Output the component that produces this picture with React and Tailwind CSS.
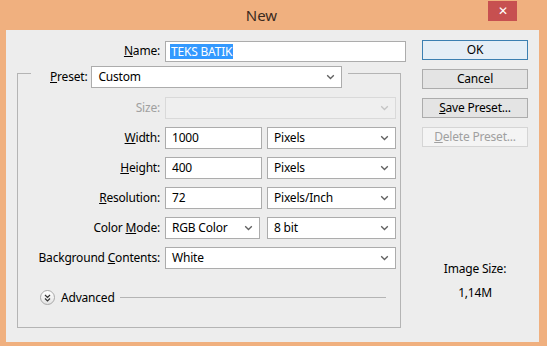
const font = { fontFamily: '"Noto Sans", "Liberation Sans", sans-serif' };

function Chevron({ disabled }) {
  return (
    <svg width="9" height="6" viewBox="0 0 9 6" className="shrink-0">
      <path d="M1.2 1.2 L4.5 4.5 L7.8 1.2" fill="none" stroke={disabled ? '#c4c4c4' : '#606060'} strokeWidth="1.3" />
    </svg>
  );
}

function Select({ value, width, disabled }) {
  return (
    <div
      className={`h-[22px] flex items-center justify-between pl-[6px] pr-[6px] border ${
        disabled ? 'bg-[#efefef] border-[#d9d9d9]' : 'bg-white border-[#acacac]'
      }`}
      style={{ width }}
    >
      <span className="text-[12px] text-black leading-none">{value}</span>
      <Chevron disabled={disabled} />
    </div>
  );
}

function Input({ value, width }) {
  return (
    <div className="h-[22px] flex items-center pl-[6px] bg-white border border-[#acacac]" style={{ width }}>
      <span className="text-[12px] text-black leading-none">{value}</span>
    </div>
  );
}

function Label({ children, width, disabled }) {
  return (
    <div
      className={`text-right pr-[5px] text-[12px] leading-none ${disabled ? 'text-[#a0a0a0]' : 'text-black'}`}
      style={{ width }}
    >
      {children}
    </div>
  );
}

function Btn({ children, primary, disabled }) {
  return (
    <div
      className={`h-[20px] w-[106px] flex items-center justify-center text-[12px] leading-none border ${
        primary ? 'border-[#3c7fb1] bg-[#e5eef6]' : disabled ? 'border-[#d5d5d5] bg-[#f4f4f4]' : 'border-[#acacac] bg-[#e4e4e4]'
      } ${disabled ? 'text-[#a0a0a0]' : 'text-black'}`}
    >
      {children}
    </div>
  );
}

export default function App() {
  return (
    <div className="w-[547px] h-[346px] bg-[#f0b07f] flex flex-col tracking-[-0.2px]" style={font}>
      {/* title bar */}
      <div className="h-[30px] relative flex items-center justify-center shrink-0">
        <span className="text-[15px] text-[#3b2a1e] ml-[-24px] tracking-normal">New</span>
        <div className="absolute top-[1px] left-[488px] w-[29px] h-[20px] bg-[#c75050] flex items-center justify-center text-white text-[12px] leading-none">
          ✕
        </div>
      </div>

      {/* client area */}
      <div className="ml-[6px] mr-[8px] mb-[4px] flex-1 bg-[#ededed] flex">
        <div className="w-[410px] pt-[11px] flex flex-col">
          {/* name */}
          <div className="flex items-center h-[20px]">
            <Label width={159}>
              <u>N</u>ame:
            </Label>
            <div className="h-[21px] w-[241px] flex items-center pl-[4px] bg-white border border-[#acacac]">
              <span className="text-[12px] leading-[15px] bg-[#3399ff] text-white px-[1px]">TEKS BATIK</span>
            </div>
          </div>

          {/* group box */}
          <div className="ml-[11px] mt-[12px] w-[384px] h-[255px] border-x border-b border-[#b4b4b4] flex flex-col">
            <div className="flex items-start -mt-[7px] -mx-px h-[22px]">
              <div className="w-[14px] mt-[7px] border-t border-l border-[#b4b4b4] h-[15px]" />
              <div className="flex items-center h-[22px] pl-[19px] pr-[6px]">
                <span className="text-[12px] leading-none text-black mr-[4px]">
                  <u>P</u>reset:
                </span>
                <Select value="Custom" width={251} />
              </div>
              <div className="flex-1 mt-[7px] border-t border-r border-[#b4b4b4] h-[15px]" />
            </div>

            <div className="flex flex-col gap-[8px] mt-[9px]">
              <div className="flex items-center">
                <Label width={147} disabled>
                  Size:
                </Label>
                <Select value="" width={231} disabled />
              </div>
              <div className="flex items-center">
                <Label width={147}>
                  <u>W</u>idth:
                </Label>
                <Input value="1000" width={97} />
                <div className="w-[5px]" />
                <Select value="Pixels" width={129} />
              </div>
              <div className="flex items-center">
                <Label width={147}>
                  <u>H</u>eight:
                </Label>
                <Input value="400" width={97} />
                <div className="w-[5px]" />
                <Select value="Pixels" width={129} />
              </div>
              <div className="flex items-center">
                <Label width={147}>
                  <u>R</u>esolution:
                </Label>
                <Input value="72" width={97} />
                <div className="w-[5px]" />
                <Select value="Pixels/Inch" width={129} />
              </div>
              <div className="flex items-center">
                <Label width={147}>
                  Color <u>M</u>ode:
                </Label>
                <Select value="RGB Color" width={95} />
                <div className="w-[7px]" />
                <Select value="8 bit" width={129} />
              </div>
              <div className="flex items-center">
                <Label width={147}>
                  Background <u>C</u>ontents:
                </Label>
                <Select value="White" width={231} />
              </div>
            </div>

            {/* advanced */}
            <div className="flex items-center mt-[21px] ml-[22px] mr-[14px]">
              <div className="w-[15px] h-[15px] rounded-full border border-[#a8a8a8] bg-gradient-to-b from-white to-[#e4e4e4] flex items-center justify-center">
                <svg width="7" height="8" viewBox="0 0 7 8">
                  <path d="M1 1 L3.5 3.5 L6 1 M1 4.5 L3.5 7 L6 4.5" fill="none" stroke="#333" strokeWidth="1.2" />
                </svg>
              </div>
              <span className="text-[12px] leading-none text-black ml-[6px] mr-[5px]">Advanced</span>
              <div className="flex-1 border-t border-[#b4b4b4]" />
            </div>
          </div>
        </div>

        {/* right column */}
        <div className="ml-[6px] pt-[10px] flex flex-col">
          <div className="flex flex-col gap-[9px]">
            <Btn primary>OK</Btn>
            <Btn>Cancel</Btn>
            <Btn>
              <span>
                <u>S</u>ave Preset...
              </span>
            </Btn>
            <Btn disabled>
              <span>
                <u>D</u>elete Preset...
              </span>
            </Btn>
          </div>
          <div className="mt-[116px] w-[106px] flex flex-col items-center text-[12px] text-black leading-none">
            <span>Image Size:</span>
            <span className="mt-[12px]">1,14M</span>
          </div>
        </div>
      </div>
    </div>
  );
}
